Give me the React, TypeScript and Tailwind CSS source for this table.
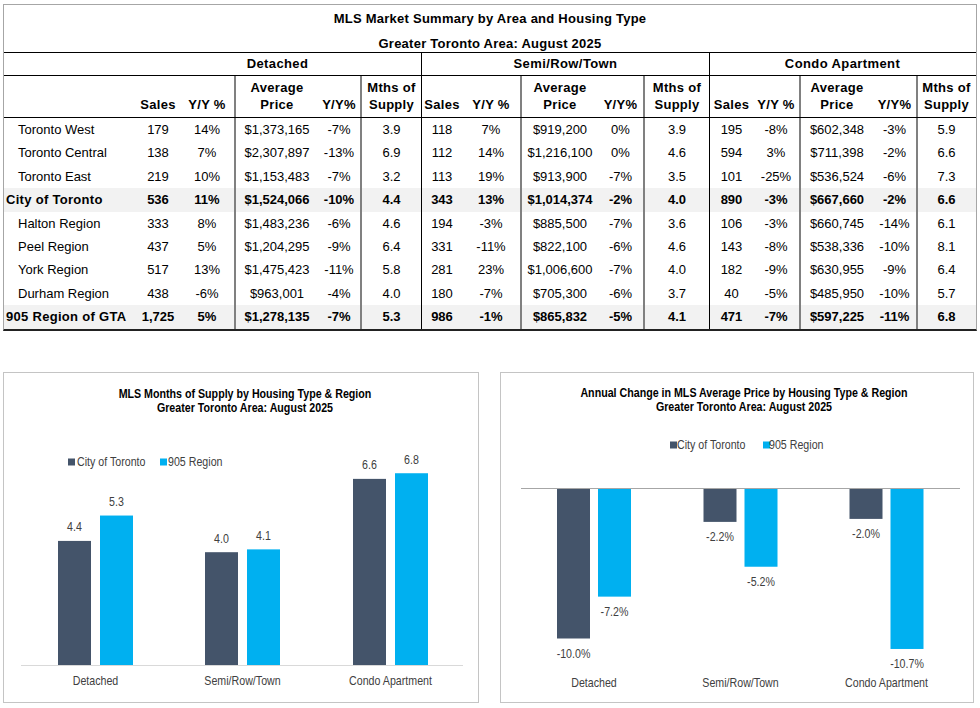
import React from "react";

const COLS =
  "grid grid-cols-[132px_44px_54px_84px_42px_61px_41px_58px_78px_45px_66px_44px_46px_74px_43px_59px]";

const VB = [
  "",
  "",
  "",
  "border-l-2 border-[#808080]",
  "",
  "border-l-2 border-[#808080]",
  "border-l border-black",
  "",
  "border-l-2 border-[#808080]",
  "",
  "border-l-2 border-[#808080]",
  "border-l border-black",
  "",
  "border-l-2 border-[#808080]",
  "",
  "border-l-2 border-[#808080]",
];

type Row = { label: string; bold?: boolean; v: string[] };

const rows: Row[] = [
  { label: "Toronto West", v: ["179", "14%", "$1,373,165", "-7%", "3.9", "118", "7%", "$919,200", "0%", "3.9", "195", "-8%", "$602,348", "-3%", "5.9"] },
  { label: "Toronto Central", v: ["138", "7%", "$2,307,897", "-13%", "6.9", "112", "14%", "$1,216,100", "0%", "4.6", "594", "3%", "$711,398", "-2%", "6.6"] },
  { label: "Toronto East", v: ["219", "10%", "$1,153,483", "-7%", "3.2", "113", "19%", "$913,900", "-7%", "3.5", "101", "-25%", "$536,524", "-6%", "7.3"] },
  { label: "City of Toronto", bold: true, v: ["536", "11%", "$1,524,066", "-10%", "4.4", "343", "13%", "$1,014,374", "-2%", "4.0", "890", "-3%", "$667,660", "-2%", "6.6"] },
  { label: "Halton Region", v: ["333", "8%", "$1,483,236", "-6%", "4.6", "194", "-3%", "$885,500", "-7%", "3.6", "106", "-3%", "$660,745", "-14%", "6.1"] },
  { label: "Peel Region", v: ["437", "5%", "$1,204,295", "-9%", "6.4", "331", "-11%", "$822,100", "-6%", "4.6", "143", "-8%", "$538,336", "-10%", "8.1"] },
  { label: "York Region", v: ["517", "13%", "$1,475,423", "-11%", "5.8", "281", "23%", "$1,006,600", "-7%", "4.0", "182", "-9%", "$630,955", "-9%", "6.4"] },
  { label: "Durham Region", v: ["438", "-6%", "$963,001", "-4%", "4.0", "180", "-7%", "$705,300", "-6%", "3.7", "40", "-5%", "$485,950", "-10%", "5.7"] },
  { label: "905 Region of GTA", bold: true, v: ["1,725", "5%", "$1,278,135", "-7%", "5.3", "986", "-1%", "$865,832", "-5%", "4.1", "471", "-7%", "$597,225", "-11%", "6.8"] },
];

const headTop = ["", "", "", "Average", "", "Mths of", "", "", "Average", "", "Mths of", "", "", "Average", "", "Mths of"];
const headBot = ["", "Sales", "Y/Y %", "Price", "Y/Y%", "Supply", "Sales", "Y/Y %", "Price", "Y/Y%", "Supply", "Sales", "Y/Y %", "Price", "Y/Y%", "Supply"];

function Table() {
  return (
    <div className="ml-[3px] mt-[4px] w-[974px] border-t border-l border-r border-t-[#a6a6a6] border-l-[#a6a6a6] border-r-[#a6a6a6] border-b-2 border-b-[#222] text-black font-['Liberation_Sans',Arial,sans-serif] text-[13px]">
      <div className="h-[28px] flex items-center justify-center font-bold tracking-[0.25px]">
        MLS Market Summary by Area and Housing Type
      </div>
      <div className="h-[20px] flex items-start justify-center font-bold tracking-[0.25px] border-b border-black pt-[1px]">
        Greater Toronto Area: August 2025
      </div>
      <div className={`${COLS} h-[23px] border-b border-black font-bold tracking-[0.4px]`}>
        <div className="col-span-6 flex items-center justify-center pl-[130px]">Detached</div>
        <div className="col-span-5 flex items-center justify-center border-l border-black">Semi/Row/Town</div>
        <div className="col-span-5 flex items-center justify-center border-l border-black">Condo Apartment</div>
      </div>
      <div className={`${COLS} h-[42px] border-b border-black font-bold tracking-[0.3px] leading-[17px]`}>
        {headBot.map((b, i) => (
          <div key={i} className={`flex flex-col items-center justify-end pb-[4px] ${VB[i]}`}>
            {headTop[i] ? <span>{headTop[i]}</span> : null}
            <span>{b}</span>
          </div>
        ))}
      </div>
      {rows.map((r, ri) => (
        <div key={ri} className={`${COLS} h-[23.4px] ${r.bold ? "bg-[#f2f2f2] font-bold" : ""}`}>
          <div className={`flex items-center whitespace-nowrap ${r.bold ? "pl-[2px] tracking-[0.3px]" : "pl-[14px]"}`}>{r.label}</div>
          {r.v.map((x, i) => (
            <div key={i} className={`flex items-center justify-center whitespace-nowrap ${VB[i + 1]}`}>
              {x}
            </div>
          ))}
        </div>
      ))}
    </div>
  );
}

const DARK = "#44546a";
const BLUE = "#00b0f0";
const FONT = "'Liberation Sans',Arial,sans-serif";
const SX = 0.82;

function T({ x, y, children, anchor = "middle", fill = "#404040", size = 13 }: { x: number; y: number; children: React.ReactNode; anchor?: "start" | "middle" | "end"; fill?: string; size?: number }) {
  return (
    <text
      transform={`translate(${x} ${y}) scale(${SX} 1)`}
      textAnchor={anchor}
      dominantBaseline="central"
      fill={fill}
      fontSize={size}
      fontFamily={FONT}
    >
      {children}
    </text>
  );
}

const cats = ["Detached", "Semi/Row/Town", "Condo Apartment"];

function SupplyChart() {
  const base = 665;
  const k = 28.2;
  const centers = [95.5, 242.5, 390.5];
  const data = [
    [4.4, 5.3],
    [4.0, 4.1],
    [6.6, 6.8],
  ];
  return (
    <div className="w-[476px] h-[331px] border border-[#c4c4c4] flex flex-col">
      <div className="pt-[14px] pl-[8px] text-center font-bold text-[13px] leading-[14px] text-black font-['Liberation_Sans',Arial,sans-serif] whitespace-nowrap">
        <div className="scale-x-[0.82]">MLS Months of Supply by Housing Type &amp; Region</div>
        <div className="scale-x-[0.82]">Greater Toronto Area: August 2025</div>
      </div>
      <svg width={474} height={287} viewBox="4 415 474 287" className="block">
        <rect x={68} y={458.5} width={7} height={7} fill={DARK} />
        <T x={77} y={462} anchor="start">City of Toronto</T>
        <rect x={160} y={458.5} width={7} height={7} fill={BLUE} />
        <T x={168} y={462} anchor="start">905 Region</T>
        <line x1={21} x2={463} y1={665.5} y2={665.5} stroke="#d9d9d9" strokeWidth={1} />
        {centers.map((c, i) => {
          const [a, b] = data[i];
          const ha = a * k;
          const hb = b * k;
          return (
            <g key={i}>
              <rect x={c - 37.5} y={base - ha} width={33} height={ha} fill={DARK} />
              <rect x={c + 4.5} y={base - hb} width={33} height={hb} fill={BLUE} />
              <T x={c - 21} y={base - ha - 14}>{a.toFixed(1)}</T>
              <T x={c + 21} y={base - hb - 14}>{b.toFixed(1)}</T>
              <T x={c} y={681}>{cats[i]}</T>
            </g>
          );
        })}
      </svg>
    </div>
  );
}

function PriceChart() {
  const zero = 489;
  const k = 14.95;
  const centers = [594, 740.5, 886.5];
  const data = [
    [-10.0, -7.2],
    [-2.2, -5.2],
    [-2.0, -10.7],
  ];
  return (
    <div className="w-[474px] h-[331px] border border-[#c4c4c4] flex flex-col">
      <div className="pt-[13px] pl-[14px] text-center font-bold text-[13px] leading-[14px] text-black font-['Liberation_Sans',Arial,sans-serif] whitespace-nowrap">
        <div className="scale-x-[0.82]">Annual Change in MLS Average Price by Housing Type &amp; Region</div>
        <div className="scale-x-[0.82]">Greater Toronto Area: August 2025</div>
      </div>
      <svg width={472} height={288} viewBox="501 414 472 288" className="block">
        <rect x={670} y={441.5} width={7} height={7} fill={DARK} />
        <T x={677} y={445} anchor="start">City of Toronto</T>
        <rect x={763} y={441.5} width={7} height={7} fill={BLUE} />
        <T x={769} y={445} anchor="start">905 Region</T>
        {centers.map((c, i) => {
          const [a, b] = data[i];
          const ha = -a * k;
          const hb = -b * k;
          return (
            <g key={i}>
              <rect x={c - 37} y={zero} width={33} height={ha} fill={DARK} />
              <rect x={c + 4} y={zero} width={33} height={hb} fill={BLUE} />
              <T x={c - 20.5} y={zero + ha + 15}>{a.toFixed(1)}%</T>
              <T x={c + 20.5} y={zero + hb + 15}>{b.toFixed(1)}%</T>
              <T x={c} y={683}>{cats[i]}</T>
            </g>
          );
        })}
        <line x1={521} x2={960} y1={488.5} y2={488.5} stroke="#a6a6a6" strokeWidth={1.2} />
      </svg>
    </div>
  );
}

export default function App() {
  return (
    <div className="w-[980px] h-[708px] bg-white overflow-hidden">
      <Table />
      <div className="flex ml-[3px] mt-[41px] gap-[21px]">
        <SupplyChart />
        <PriceChart />
      </div>
    </div>
  );
}
